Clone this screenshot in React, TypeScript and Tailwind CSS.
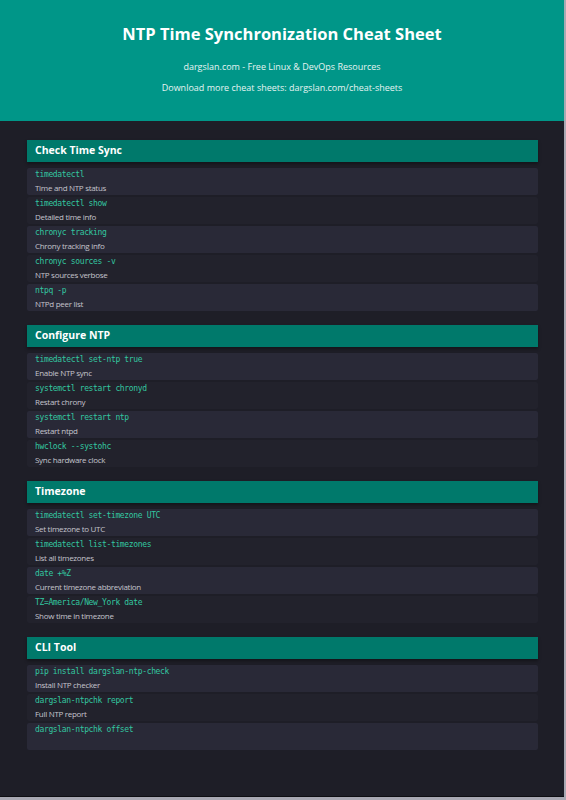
import React from "react";

type Item = { cmd: string; desc: string };
type Section = { title: string; items: Item[] };

const sections: Section[] = [
  {
    title: "Check Time Sync",
    items: [
      { cmd: "timedatectl", desc: "Time and NTP status" },
      { cmd: "timedatectl show", desc: "Detailed time info" },
      { cmd: "chronyc tracking", desc: "Chrony tracking info" },
      { cmd: "chronyc sources -v", desc: "NTP sources verbose" },
      { cmd: "ntpq -p", desc: "NTPd peer list" },
    ],
  },
  {
    title: "Configure NTP",
    items: [
      { cmd: "timedatectl set-ntp true", desc: "Enable NTP sync" },
      { cmd: "systemctl restart chronyd", desc: "Restart chrony" },
      { cmd: "systemctl restart ntp", desc: "Restart ntpd" },
      { cmd: "hwclock --systohc", desc: "Sync hardware clock" },
    ],
  },
  {
    title: "Timezone",
    items: [
      { cmd: "timedatectl set-timezone UTC", desc: "Set timezone to UTC" },
      { cmd: "timedatectl list-timezones", desc: "List all timezones" },
      { cmd: "date +%Z", desc: "Current timezone abbreviation" },
      { cmd: "TZ=America/New_York date", desc: "Show time in timezone" },
    ],
  },
  {
    title: "CLI Tool",
    items: [
      { cmd: "pip install dargslan-ntp-check", desc: "Install NTP checker" },
      { cmd: "dargslan-ntpchk report", desc: "Full NTP report" },
      { cmd: "dargslan-ntpchk offset", desc: "" },
    ],
  },
];

export default function App() {
  return (
    <div className="w-[566px] h-[800px] bg-[#a9a9b3] overflow-hidden">
      <div className="w-[564px] h-[797px] bg-[#1e1e27] border-b border-[#0e0e12] flex flex-col">
        <div className="h-[121px] bg-[#009688] flex flex-col items-center text-white [font-family:'Open_Sans',sans-serif]">
          <div className="mt-[21px] text-[16.5px] font-bold leading-[26px]">
            NTP Time Synchronization Cheat Sheet
          </div>
          <div className="mt-[13px] text-[9px] leading-[14px] text-[#e6f4f2]">
            dargslan.com - Free Linux &amp; DevOps Resources
          </div>
          <div className="mt-[7px] text-[9px] leading-[14px] text-[#e6f4f2]">
            Download more cheat sheets: dargslan.com/cheat-sheets
          </div>
        </div>
        <div className="pl-[27px] pr-[26px] pt-[19px] flex flex-col gap-[14px]">
          {sections.map((s) => (
            <div key={s.title} className="flex flex-col">
              <div className="h-[22px] bg-[#00796b] pl-[8px] flex items-center text-white text-[10.5px] font-bold [font-family:'Open_Sans',sans-serif] shadow-[0_2px_3px_rgba(0,0,0,0.35)]">
                {s.title}
              </div>
              <div className="mt-[6px] flex flex-col gap-[2px]">
                {s.items.map((it, i) => (
                  <div
                    key={it.cmd}
                    className={`h-[27px] rounded-[2px] pl-[8px] pt-[1px] flex flex-col ${
                      i % 2 === 0 ? "bg-[#292937]" : "bg-[#22222c]"
                    }`}
                  >
                    <div className="text-[8px] leading-[12px] tracking-[-0.35px] text-[#33c7a0] [font-family:'DejaVu_Sans_Mono',monospace]">
                      {it.cmd}
                    </div>
                    <div className="text-[8px] leading-[13px] tracking-[-0.3px] text-[#c4c4cc] [font-family:'Open_Sans',sans-serif]">
                      {it.desc}
                    </div>
                  </div>
                ))}
              </div>
            </div>
          ))}
        </div>
      </div>
    </div>
  );
}
